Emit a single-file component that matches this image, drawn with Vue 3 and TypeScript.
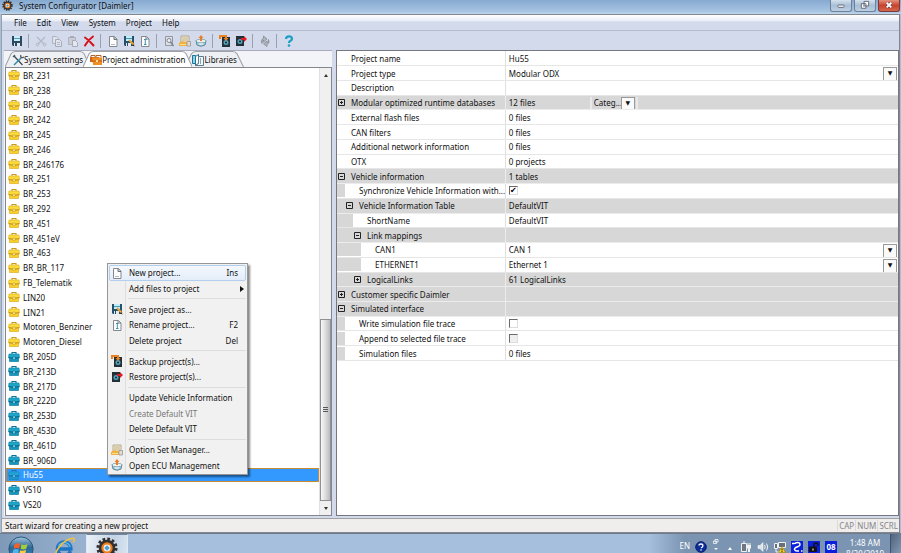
<script setup lang="ts">
import { computed, ref } from 'vue'

interface ToolItem { icon: string; label: string; disabled?: boolean }
interface PropRow {
  label: string
  value?: string
  level: number
  group?: boolean
  open?: boolean
  kind?: 'select' | 'check' | 'category'
  checked?: boolean
  disabled?: boolean
}
interface MenuEntry { label: string; icon?: string; key?: string; sub?: boolean; disabled?: boolean; hot?: boolean }

const menus = ['File', 'Edit', 'View', 'System', 'Project', 'Help']

const toolGroups: ToolItem[][] = [
  [{ icon: 'save', label: 'Save' }],
  [
    { icon: 'cut', label: 'Cut', disabled: true },
    { icon: 'copy', label: 'Copy', disabled: true },
    { icon: 'paste', label: 'Paste', disabled: true },
    { icon: 'delete', label: 'Delete' },
  ],
  [
    { icon: 'new', label: 'New project' },
    { icon: 'saveas', label: 'Save project as' },
    { icon: 'rename', label: 'Rename project' },
  ],
  [
    { icon: 'view', label: 'Preview', disabled: true },
    { icon: 'options', label: 'Option Set Manager' },
    { icon: 'ecu', label: 'Open ECU Management' },
  ],
  [
    { icon: 'backup', label: 'Backup projects' },
    { icon: 'restore', label: 'Restore projects' },
  ],
  [{ icon: 'sync', label: 'Synchronize', disabled: true }],
  [{ icon: 'help', label: 'Help' }],
]

const tabs = [
  { label: 'System settings', icon: 'tools', w: 84 },
  { label: 'Project administration', icon: 'case-orange', w: 107 },
  { label: 'Libraries', icon: 'books', w: 54 },
]
const activeTab = ref(1)
const tabPath = (w: number) => `M0 17 L6 3 Q7.5 .5 10 .5 H${w - 10} Q${w - 7.5} .5 ${w - 6} 3 L${w} 17`

const yellow = ['BR_231', 'BR_238', 'BR_240', 'BR_242', 'BR_245', 'BR_246', 'BR_246176', 'BR_251', 'BR_253', 'BR_292', 'BR_451', 'BR_451eV', 'BR_463', 'BR_BR_117', 'FB_Telematik', 'LIN20', 'LIN21', 'Motoren_Benziner', 'Motoren_Diesel']
const blue = ['BR_205D', 'BR_213D', 'BR_217D', 'BR_222D', 'BR_253D', 'BR_453D', 'BR_461D', 'BR_906D', 'Hu55', 'VS10', 'VS20']
const projects = computed(() => [
  ...yellow.map((name) => ({ name, icon: 'case-yellow' })),
  ...blue.map((name) => ({ name, icon: 'case-blue' })),
])
const selected = ref('Hu55')

const rows: PropRow[] = [
  { label: 'Project name', value: 'Hu55', level: 0 },
  { label: 'Project type', value: 'Modular ODX', level: 0, kind: 'select' },
  { label: 'Description', level: 0 },
  { label: 'Modular optimized runtime databases', value: '12 files', level: 0, group: true, open: false, kind: 'category' },
  { label: 'External flash files', value: '0 files', level: 0 },
  { label: 'CAN filters', value: '0 files', level: 0 },
  { label: 'Additional network information', value: '0 files', level: 0 },
  { label: 'OTX', value: '0 projects', level: 0 },
  { label: 'Vehicle information', value: '1 tables', level: 0, group: true, open: true },
  { label: 'Synchronize Vehicle Information with...', level: 1, kind: 'check', checked: true },
  { label: 'Vehicle Information Table', value: 'DefaultVIT', level: 1, group: true, open: true },
  { label: 'ShortName', value: 'DefaultVIT', level: 2 },
  { label: 'Link mappings', level: 2, group: true, open: true },
  { label: 'CAN1', value: 'CAN 1', level: 3, kind: 'select' },
  { label: 'ETHERNET1', value: 'Ethernet 1', level: 3, kind: 'select' },
  { label: 'LogicalLinks', value: '61 LogicalLinks', level: 2, group: true, open: false },
  { label: 'Customer specific Daimler', level: 0, group: true, open: false },
  { label: 'Simulated interface', level: 0, group: true, open: true },
  { label: 'Write simulation file trace', level: 1, kind: 'check' },
  { label: 'Append to selected file trace', level: 1, kind: 'check', disabled: true },
  { label: 'Simulation files', value: '0 files', level: 1 },
]

const contextGroups: MenuEntry[][] = [
  [
    { label: 'New project...', icon: 'new', key: 'Ins', hot: true },
    { label: 'Add files to project', sub: true },
  ],
  [
    { label: 'Save project as...', icon: 'saveas' },
    { label: 'Rename project...', icon: 'rename', key: 'F2' },
    { label: 'Delete project', key: 'Del' },
  ],
  [
    { label: 'Backup project(s)...', icon: 'backup' },
    { label: 'Restore project(s)...', icon: 'restore' },
  ],
  [
    { label: 'Update Vehicle Information' },
    { label: 'Create Default VIT', disabled: true },
    { label: 'Delete Default VIT' },
  ],
  [
    { label: 'Option Set Manager...', icon: 'options' },
    { label: 'Open ECU Management', icon: 'ecu' },
  ],
]
</script>

<template>
  <svg class="sprite" aria-hidden="true">
    <linearGradient id="orb" x1="0" y1="0" x2="0" y2="1">
      <stop offset="0" stop-color="#9fc3dc" /><stop offset=".45" stop-color="#2d6594" /><stop offset="1" stop-color="#2f9fd0" />
    </linearGradient>
    <symbol id="i-save" viewBox="0 0 12 12">
      <path d="M1 1h10v10H2L1 10z" fill="#2b4a60" />
      <path d="M3 1h6v5H3z" fill="#cfeaf4" /><path d="M3 3h6v1H3z" fill="#4aa3c0" />
      <path d="M3 8h6v3H3z" fill="#e4e8ec" /><path d="M4 8h2v3H4z" fill="#2b4a60" />
    </symbol>
    <symbol id="i-saveas" viewBox="0 0 12 12">
      <path d="M1 1h10v10H2L1 10z" fill="#24516b" />
      <path d="M3 1h6v5H3z" fill="#c4ebf7" /><path d="M3 3h6v1H3z" fill="#3d9fc0" />
      <path d="M3 8h5v3H3z" fill="#e4e8ec" /><path d="M4 8h1v3H4z" fill="#24516b" />
      <path d="M6 5l5 5" stroke="#e8a33a" stroke-width="2" /><path d="M10 9l1.800 2.500-2.500-1z" fill="#222" />
    </symbol>
    <symbol id="i-cut" viewBox="0 0 12 12">
      <path d="M2 2l7 7M10 2L3 9" stroke="#b3b8c4" stroke-width="1.300" />
      <circle cx="2.500" cy="9.500" r="1.300" fill="none" stroke="#b3b8c4" /><circle cx="9.500" cy="9.500" r="1.300" fill="none" stroke="#b3b8c4" />
    </symbol>
    <symbol id="i-copy" viewBox="0 0 12 12">
      <path d="M1.500 1.500h4l2 2v5h-6z" fill="#dfe3ec" stroke="#aeb3be" /><path d="M4.500 4.500h4l2 2v5h-6z" fill="#dfe3ec" stroke="#a6abb6" />
      <path d="M6 7.500h3M6 9.500h3" stroke="#b3b8c4" />
    </symbol>
    <symbol id="i-paste" viewBox="0 0 12 12">
      <path d="M1.500 2.500h7v7h-7z" fill="#c9cdd7" stroke="#b0b4bf" /><path d="M3 1h4v2H3z" fill="#a6abb6" />
      <path d="M5.500 5.500h3l2 2v4h-5z" fill="#e4e7ee" stroke="#a6abb6" />
    </symbol>
    <symbol id="i-delete" viewBox="0 0 12 12">
      <path d="M2 2.500Q6 5 10.500 10.500M10 1.500Q5 5 2 10.500" stroke="#d6141c" stroke-width="2" fill="none" stroke-linecap="round" />
    </symbol>
    <symbol id="i-new" viewBox="0 0 12 12">
      <path d="M2.500 1.500h5l2.500 2.500v7.500H2.500z" fill="#fdfdfd" stroke="#85888e" /><path d="M7 1.500V4.500h3" fill="#c9ccd2" stroke="#6f7278" />
      <path d="M4 9.500h4" stroke="#b8bcc4" />
    </symbol>
    <symbol id="i-rename" viewBox="0 0 12 12">
      <path d="M2.500 1.500h5l2.500 2.500v7.500H2.500z" fill="#fdfdfd" stroke="#85898f" /><path d="M5 4.500h2.500M6.300 4.500v5M5 9.500h2.500" stroke="#3f93ae" fill="none" />
      <path d="M7 1.500V4h3" fill="none" stroke="#7b7f86" />
    </symbol>
    <symbol id="i-view" viewBox="0 0 12 12">
      <path d="M2.500 1.500h7v9h-7z" fill="#dcdfe6" stroke="#9297a1" /><circle cx="6" cy="5.500" r="2" fill="#eef0f4" stroke="#80858f" />
      <path d="M7.500 7l3 4" stroke="#80858f" stroke-width="1.500" />
    </symbol>
    <symbol id="i-options" viewBox="0 0 12 12">
      <path d="M2 1h8v7H2z" fill="#f9efcf" stroke="#a5977a" stroke-width=".8" /><path d="M4 2v5M6 2v4M8 2v4" stroke="#b7ab90" />
      <path d="M0 8l2-1.500h7l3 1V11H0z" fill="#efb140" /><path d="M8 6.500h3.500V11H8z" fill="#dcdcdc" stroke="#9a9a9a" stroke-width=".8" /><path d="M1 9.500h6" stroke="#fbe08a" />
    </symbol>
    <symbol id="i-ecu" viewBox="0 0 12 12">
      <path d="M1 5.500h10L10 10q-4 2.500-8 0z" fill="#a9cfdd" stroke="#5b8796" />
      <ellipse cx="6" cy="6" rx="5" ry="1.800" fill="#e6f2f6" stroke="#6f97a5" stroke-width=".7" />
      <path d="M6 0l2.500 3H7v3H5V3H3.500z" fill="#ee7d22" /><path d="M4 9h4" stroke="#fff" />
    </symbol>
    <symbol id="i-backup" viewBox="0 0 12 12">
      <path d="M3 2h8v10H3z" fill="#243038" /><circle cx="7" cy="7.500" r="2.500" fill="#54a4bd" /><circle cx="7" cy="7.500" r="1" fill="#1b2328" />
      <path d="M1 4V1h6v3" fill="none" stroke="#e9821f" stroke-width="2" /><path d="M4.500 3h5L7 6z" fill="#e9821f" />
    </symbol>
    <symbol id="i-restore" viewBox="0 0 12 12">
      <path d="M1 1h8v10H1z" fill="#243038" /><circle cx="5" cy="6.500" r="2.500" fill="#54a4bd" /><circle cx="5" cy="6.500" r="1" fill="#1b2328" />
      <path d="M6 3h3V1l3 3-3 3V5H6z" fill="#df1f24" />
    </symbol>
    <symbol id="i-sync" viewBox="0 0 12 12">
      <path d="M3 8.500Q1 5 4.500 3V1L8 4 4.500 7V5Q3 6 3 8.500z" fill="#b0b4bc" stroke="#868b94" stroke-width=".8" />
      <path d="M9.500 4.500q2 3.500-1.500 5v2L4.500 8.800 8 6v1.800Q9.500 7 9.500 4.500z" fill="#b0b4bc" stroke="#868b94" stroke-width=".8" />
    </symbol>
    <symbol id="i-help" viewBox="0 0 12 12">
      <path d="M3 4q0-2.700 3-2.700T9 3.800Q9 5 7.500 5.800 6 6.500 6 8" fill="none" stroke="#1f9fc6" stroke-width="2.200" /><circle cx="6" cy="10.500" r="1.300" fill="#1f9fc6" />
    </symbol>
    <symbol id="i-tools" viewBox="0 0 12 12">
      <path d="M2 2l8.500 9" stroke="#3d4b55" stroke-width="1.300" /><path d="M10 3L2 11" stroke="#2f88a8" stroke-width="1.500" />
      <path d="M9 1q-1 2 .5 2.500T12 3" fill="none" stroke="#4d565d" stroke-width="1.200" /><path d="M1 3l2-2" stroke="#4d565d" stroke-width="1.300" />
    </symbol>
    <symbol id="i-case-orange" viewBox="0 0 12 12">
      <path d="M1 3V1.500h4v2M6 3V1.500h5v2" fill="none" stroke="#b2622a" /><path d="M0 3h9v5H0z" fill="#c9651f" />
      <path d="M2 3.500h10V11H3z" fill="#ee8e27" /><path d="M2 7h10" stroke="#bf5c15" /><path d="M6 6h2v2H6z" fill="#ffe08a" />
    </symbol>
    <symbol id="i-case-yellow" viewBox="0 0 12 12">
      <path d="M4 3V1.500h4V3" fill="none" stroke="#c79a1c" stroke-width="1.100" /><path d="M1 3h10l.5 4H.5z" fill="#fcdc3a" stroke="#e0b528" stroke-width=".7" />
      <path d="M1.500 7h9v3.500h-9z" fill="#fbd02a" stroke="#dcae22" stroke-width=".7" /><path d="M1 6.500q5 2 10 0" fill="none" stroke="#c99a18" /><path d="M5 6h2v2.500H5z" fill="#fff3ae" stroke="#c2941a" stroke-width=".5" />
    </symbol>
    <symbol id="i-case-blue" viewBox="0 0 12 12">
      <path d="M4 3V1.500h4V3" fill="none" stroke="#0f7094" stroke-width="1.100" /><path d="M1 3h10l.5 4H.5z" fill="#1da6ca" stroke="#1389ae" stroke-width=".7" />
      <path d="M1.500 7h9v3.500h-9z" fill="#1497be" stroke="#0f7fa4" stroke-width=".7" /><path d="M1 6.500q5 2 10 0" fill="none" stroke="#0c6c8e" /><path d="M5 6h2v2.500H5z" fill="#a4e4f3" stroke="#0b6587" stroke-width=".5" />
    </symbol>
    <symbol id="i-books" viewBox="0 0 12 12">
      <path d="M.5 1.500h3v8h-3z" fill="#8fd0e6" stroke="#1a7596" /><path d="M3.500 2.500l3-2v9l-3 2z" fill="#fff" stroke="#1a7596" />
      <path d="M6.500 2.500h5v9h-8l3-2z" fill="#eef7fa" stroke="#5b7c8a" /><path d="M8.500 4v6" stroke="#8aa4ae" />
    </symbol>
    <symbol id="i-gear" viewBox="0 0 24 24">
      <circle cx="12" cy="12" r="9.500" fill="none" stroke="#33302f" stroke-width="4" stroke-dasharray="2.800 2.174" />
      <circle cx="12" cy="12" r="7" fill="#fff" stroke="#33302f" stroke-width="4" /><circle cx="12" cy="12" r="5" fill="#e8f1f6" stroke="#ee7d1c" stroke-width="2.400" />
      <path d="M12 9l3 3-3 3-3-3z" fill="#4f9fc9" />
    </symbol>
    <symbol id="i-start" viewBox="0 0 28 28">
      <circle cx="14" cy="14" r="13" fill="url(#orb)" stroke="#254f74" />
      <path d="M7 9q3-2 6-.5l-1 5q-3-1.500-6 .3z" fill="#f0622a" /><path d="M14.500 9q3 1.500 6.500-.5l-1.200 5q-3 1.800-6.200.3z" fill="#a3ce3b" />
      <path d="M5.700 15q3-1.800 6-.3l-1 5q-3-1.300-6 .5z" fill="#4fb4ec" /><path d="M13.200 15.300q3.300 1.400 6.300-.4l-1.200 5q-3 1.800-6.200.3z" fill="#fccd3a" />
    </symbol>
    <symbol id="i-ie" viewBox="0 0 24 24">
      <path d="M19 15.500A7.300 7.300 0 1 1 19.500 13H6" fill="none" stroke="#1d74c4" stroke-width="3.800" />
      <path d="M19 11A7 7 0 0 0 6 10" fill="none" stroke="#63c0ee" stroke-width="1.300" />
      <path d="M4 21q-3-2 2-9Q12 4 19 2t3 4" fill="none" stroke="#f3c13c" stroke-width="1.700" />
    </symbol>
    <symbol id="t-help" viewBox="0 0 12 12">
      <circle cx="6" cy="6" r="5.300" fill="#0b2e9c" stroke="#0a1f66" /><path d="M4 4.500Q4 3 6 3t2 1.500T6 7" fill="none" stroke="#fff" stroke-width="1.300" /><circle cx="6" cy="9" r=".8" fill="#fff" />
    </symbol>
    <symbol id="t-windows" viewBox="0 0 8 12">
      <path d="M3 .5h3v2.500H3zM1.500 2h3v2.500h-3z" fill="#7e93ad" stroke="#f2f6fa" stroke-width=".8" /><path d="M2 9h4L4 11z" fill="#f2f6fa" />
    </symbol>
    <symbol id="t-plug" viewBox="0 0 12 12">
      <path d="M1.500 2.500h5v8h-5z" fill="#6d7681" stroke="#f1f1f1" /><path d="M3 1h2M8 2v2M10 2v2" stroke="#f1f1f1" /><path d="M7 4h4v3l-1 1v3H8V8L7 7z" fill="#f1f1f1" />
    </symbol>
    <symbol id="t-sound" viewBox="0 0 12 12">
      <path d="M1 4.500h2l3-3v9l-3-3H1z" fill="#dfe5ec" stroke="#f5f7f9" stroke-width=".6" /><path d="M7.500 4q1.500 2 0 4M9.500 2.500q2.500 3.500 0 7" fill="none" stroke="#f2f5f8" />
    </symbol>
    <symbol id="t-net" viewBox="0 0 12 12">
      <path d="M.5 2.500h3v5h-3zM4.500 1.500h7v5h-7z" fill="#65717f" stroke="#f2f2f2" /><path d="M2 8v3h4" stroke="#f2f2f2" fill="none" />
      <path d="M8 5.500l3.500 6h-7z" fill="#ffd51e" stroke="#a07a00" stroke-width=".5" /><path d="M8 7.500v2M8 10v1" stroke="#222" />
    </symbol>
    <symbol id="t-two" viewBox="0 0 12 12">
      <path d="M0 0h12v12H0z" fill="#0a1fdc" /><path d="M1 2.500h2.500M4 3q0-1.500 2.500-1.500t2.500 2Q9 5 6 6T3.500 8.500 6 10h2M10 10h1.500" fill="none" stroke="#fff" stroke-width="1.400" />
    </symbol>
    <symbol id="t-lock" viewBox="0 0 12 12">
      <path d="M0 0h12v12H0z" fill="#0a1fdc" /><path d="M1 5.500h8V11H1z" fill="#111" /><path d="M6 6V3.500Q6 2 8 2t2 1.500V5" fill="none" stroke="#111" stroke-width="1.500" /><path d="M4.500 7.500h1v2h-1z" fill="#fff" />
    </symbol>
  </svg>

  <main class="screen">
    <header class="titlebar">
      <svg class="app-icon"><use href="#i-gear" /></svg>
      <h1>System Configurator [Daimler]</h1>
      <div class="win-buttons">
        <button type="button" aria-label="Minimize"><svg viewBox="0 0 20 12"><rect x="6.500" y="5.500" width="7" height="2.500" rx="1" fill="#fff" stroke="#5d6470" /></svg></button>
        <button type="button" aria-label="Restore"><svg viewBox="0 0 20 12"><path d="M9 1.500h5v5H9zM6 4h5v5H6z" fill="#fff" stroke="#5d6470" /><path d="M8 6h1v1H8z" fill="#5d6470" /></svg></button>
        <button type="button" class="close" aria-label="Close"><svg viewBox="0 0 20 12"><path d="M7.500 3l5 5M12.500 3l-5 5" stroke="#6a4040" stroke-width="3.400" /><path d="M7.500 3l5 5M12.500 3l-5 5" stroke="#fff" stroke-width="2" /></svg></button>
      </div>
    </header>

    <div class="window">
      <nav class="menubar">
        <button v-for="m in menus" :key="m" type="button">{{ m }}</button>
      </nav>

      <div class="toolbar" role="toolbar">
        <div v-for="(g, i) in toolGroups" :key="i" class="tool-group">
          <button v-for="t in g" :key="t.icon" type="button" :aria-label="t.label" :disabled="t.disabled">
            <svg class="icon"><use :href="'#i-' + t.icon" /></svg>
          </button>
        </div>
      </div>

      <div class="panes">
        <section class="left">
          <div class="tabs" role="tablist">
            <button
              v-for="(t, i) in tabs" :key="t.label" type="button" role="tab"
              :aria-selected="i === activeTab" :class="{ active: i === activeTab }" @click="activeTab = i"
            >
              <svg class="tab-shape" :viewBox="`0 0 ${t.w} 17`" preserveAspectRatio="none"><path :d="tabPath(t.w)" /></svg>
              <svg class="icon"><use :href="'#i-' + t.icon" /></svg>
              <span>{{ t.label }}</span>
            </button>
          </div>

          <div class="tree-box">
            <ul class="tree">
              <li v-for="p in projects" :key="p.name" :class="{ selected: p.name === selected }" @click="selected = p.name">
                <svg class="icon"><use :href="'#i-' + p.icon" /></svg>
                <span>{{ p.name }}</span>
              </li>
            </ul>
            <div class="scrollbar">
              <button type="button" aria-label="Scroll up"><i class="arrow up"></i></button>
              <div class="track"></div>
              <div class="thumb"><i></i><i></i><i></i></div>
              <button type="button" aria-label="Scroll down"><i class="arrow"></i></button>
            </div>

            <ul class="context" role="menu">
              <template v-for="(g, gi) in contextGroups" :key="gi">
                <li v-if="gi" class="rule" role="separator"></li>
                <li v-for="e in g" :key="e.label" class="entry" role="none">
                  <button type="button" role="menuitem" :disabled="e.disabled" :class="{ hot: e.hot }">
                    <span class="slot"><svg v-if="e.icon" class="icon"><use :href="'#i-' + e.icon" /></svg></span>
                    <span class="text">{{ e.label }}</span>
                    <kbd v-if="e.key">{{ e.key }}</kbd>
                    <i v-if="e.sub" class="submark"></i>
                  </button>
                </li>
              </template>
            </ul>
          </div>
        </section>

        <section class="right">
          <table class="props">
            <colgroup><col class="c-name"><col></colgroup>
            <tbody>
              <tr v-for="(r, i) in rows" :key="i" :class="[{ group: r.group }, 'l' + r.level]">
                <th scope="row">
                  <div class="name">
                    <span class="gutter">
                      <svg v-if="r.group" class="box" viewBox="0 0 7 7"><path d="M.5 .5h6v6h-6zM2 3.500h3" /><path v-if="!r.open" d="M3.500 2v3" /></svg>
                    </span>
                    <label v-if="r.kind" :for="'p' + i">{{ r.label }}</label>
                    <span v-else class="caption">{{ r.label }}</span>
                  </div>
                </th>
                <td>
                  <div v-if="r.kind === 'category'" class="category">
                    <span>{{ r.value }}</span>
                    <select :id="'p' + i"><option>Categ...</option></select>
                  </div>
                  <select v-else-if="r.kind === 'select'" :id="'p' + i"><option>{{ r.value }}</option></select>
                  <input v-else-if="r.kind === 'check'" :id="'p' + i" type="checkbox" :checked="r.checked" :disabled="r.disabled">
                  <span v-else>{{ r.value }}</span>
                </td>
              </tr>
            </tbody>
          </table>
        </section>
      </div>

      <footer class="status">
        <span class="message">Start wizard for creating a new project</span>
        <span>CAP</span><span>NUM</span><span>SCRL</span>
      </footer>
    </div>

    <div class="taskbar">
      <button type="button" class="start" aria-label="Start"><svg><use href="#i-start" /></svg></button>
      <button type="button" class="task" aria-label="Internet Explorer"><svg><use href="#i-ie" /></svg></button>
      <button type="button" class="task running" aria-label="System Configurator"><svg><use href="#i-gear" /></svg></button>
      <div class="tray">
        <span class="lang">EN</span>
        <svg class="icon"><use href="#t-help" /></svg>
        <svg class="thin"><use href="#t-windows" /></svg>
        <i class="arrow up light"></i>
        <svg class="icon"><use href="#t-plug" /></svg>
        <svg class="icon"><use href="#t-sound" /></svg>
        <svg class="icon"><use href="#t-net" /></svg>
        <svg class="icon"><use href="#t-two" /></svg>
        <svg class="icon"><use href="#t-lock" /></svg>
        <span class="day">08</span>
        <time class="clock"><span>1:48 AM</span><span>8/20/2019</span></time>
        <button type="button" class="peek" aria-label="Show desktop"></button>
      </div>
    </div>
  </main>
</template>

<style>
body { overflow: hidden; }
</style>

<style scoped>
.screen, .screen button, .screen select, .screen kbd {
  font: 8px/11px "Noto Sans", "Open Sans", sans-serif;
  color: #111;
}
.screen * { box-sizing: border-box; }
.screen { display: flex; flex-direction: column; height: 100vh; background: #a5bfdd; overflow: hidden; }
button { border: 0; padding: 0; background: none; }
ul { list-style: none; margin: 0; padding: 0; }
svg { display: block; flex: none; }
.sprite { position: absolute; width: 0; height: 0; }
.icon { width: 12px; height: 12px; }

.titlebar { display: flex; align-items: center; height: 14px; padding: 0 1px 3px 2px; background: linear-gradient(#86a9d0, #a9c6e3 85%, #c2d8ec); flex: none; }
.app-icon { width: 11px; height: 11px; }
.titlebar h1 { margin: 0 0 0 6px; font-size: 8px; font-weight: 400; flex: 1; }
.win-buttons { display: flex; gap: 2px; align-self: flex-start; }
.win-buttons button { width: 22px; height: 12px; border: 1px solid #6f8198; border-top: 0; border-radius: 0 0 3px 3px; background: linear-gradient(#d5e1ee, #a9bfd6 50%, #bdd0e3); }
.win-buttons .close { background: linear-gradient(#e2917f, #c8432c 50%, #d3674e); border-color: #7b3a35; }
.win-buttons svg { width: 20px; height: 11px; }

.window { display: flex; flex-direction: column; flex: 1; min-height: 0; border: 1px solid #85858d; border-left-color: #9aa0aa; margin: 0 1px; background: #d2daec; }
.menubar { display: flex; gap: 10px; height: 16px; padding: 0 12px; align-items: center; background: linear-gradient(#fff, #e9edf7 40%, #d2daec 45%); border-bottom: 1px solid #b5bac8; flex: none; }
.toolbar { display: flex; height: 19px; padding-left: 7px; align-items: center; flex: none; }
.tool-group { display: flex; }
.tool-group button { width: 16px; height: 14px; display: grid; place-items: center; }
.tool-group + .tool-group { border-left: 1px solid #9a9fae; margin-left: 3px; padding-left: 4px; }

.panes { display: flex; flex: 1; min-height: 0; padding: 0 0 2px 2px; }
.left { display: flex; flex-direction: column; flex: none; width: 37%; max-width: 328px; background: #f3f4f7; border-top: 1px solid #aab; }
.tabs { display: flex; height: 16px; padding-left: 1px; flex: none; }
.tabs button { position: relative; display: flex; align-items: center; padding: 1px 7px 0; margin-right: -7px; white-space: nowrap; }
.tabs span, .tabs .icon { position: relative; }
.tab-shape { position: absolute; inset: 0; width: 100%; height: 100%; fill: #eff0f3; stroke: #9da1a8; }
.tabs .active { z-index: 1; }
.tabs .active .tab-shape { fill: #fff; }

.tree-box { position: relative; display: flex; flex: 1; min-height: 0; margin-left: 1px; border: 1px solid #85868c; background: #fff; }
.tree { display: flex; flex-direction: column; flex: 1; padding-bottom: 3px; }
.tree li { display: flex; flex: 1; align-items: center; gap: 3px; padding-left: 2px; min-height: 0; }
.tree .selected { background: #3399ff; color: #fff; outline: 1px solid #c98a35; outline-offset: -1px; }
.tree .selected .icon { opacity: .75; }
.scrollbar { display: flex; flex-direction: column; width: 12px; background: #f0f0f1; border-left: 1px solid #e0e0e2; }
.scrollbar button { height: 14px; display: grid; place-items: center; }
.arrow { border: 2px solid transparent; border-top: 3px solid #333; border-bottom: 0; }
.arrow.up { border-top: 0; border-bottom: 3px solid #333; }
.track { flex: 239; }
.thumb { flex: 182; display: flex; flex-direction: column; align-items: center; justify-content: center; gap: 1px; border: 1px solid #8f9094; background: linear-gradient(90deg, #f8f8f8, #dcdcde 50%, #b9babd); }
.thumb i { width: 5px; height: 1px; background: #55575c; }

.context { position: absolute; left: 101px; top: 195px; width: 141px; height: 212px; display: flex; flex-direction: column; padding: 1px; border: 1px solid #979797; background: linear-gradient(90deg, #f0f0f0 17px, #dedede 17px, #dedede 18px, #f1f1f1 18px); box-shadow: 2px 2px 2px #0007; }
.entry { flex: 1; display: flex; min-height: 0; }
.entry button { display: flex; align-items: center; flex: 1; border: 1px solid transparent; text-align: left; padding-right: 7px; }
.entry .hot { border-color: #b3cfee; border-radius: 2px; background: linear-gradient(#f4f8fd, #e3edf9); }
.entry button:disabled { color: #777; }
.slot { width: 19px; padding-left: 1px; }
.text { flex: 1; white-space: nowrap; }
.submark { border: 3px solid transparent; border-left: 4px solid #111; border-right: 0; margin-right: -6px; }
.rule { height: 5px; margin-left: 19px; background: linear-gradient(transparent 2px, #dcdcdc 2px, #dcdcdc 3px, transparent 3px); }

.right { flex: 1; min-width: 0; margin-left: 4px; border: 1px solid #77787f; background: #fff; }
.props { width: 100%; height: 310px; border-collapse: collapse; table-layout: fixed; }
.c-name { width: 30%; }
.props th, .props td { padding: 0; font-weight: 400; text-align: left; height: 14px; border-bottom: 1px solid #e6e6e6; vertical-align: middle; white-space: nowrap; overflow: hidden; }
.props th { border-right: 1px solid #e0e0e0; }
.props td { padding-left: 3px; }
.props .group th, .props .group td { background: #d7d7d7; border-color: #ececec; }
.name { display: flex; align-items: center; height: 13px; }
.gutter { display: flex; align-items: center; align-self: stretch; margin-right: 14px; justify-content: flex-end; flex: none; background: #d7d7d7; }
.l0 .gutter { width: 8px; margin-right: 6px; background: none; }
.l1 .gutter { width: 8px; }
.l2 .gutter { width: 16px; }
.l3 .gutter { width: 24px; }
.group.l1 .gutter { width: 16px; margin-right: 6px; }
.group.l2 .gutter { width: 24px; margin-right: 6px; }
.box { width: 7px; height: 7px; fill: none; stroke: #222; }
.props select { display: block; width: 100%; height: 12px; border: 0; padding: 0; appearance: none; background: none; }
.props td:has(> select), .category { position: relative; }
.props td:has(> select)::after, .category::after { content: "\25BC"; position: absolute; right: 1px; top: 1px; width: 12px; height: 12px; border: 1px solid #9a9a9a; background: #fafafa; text-align: center; font: 6px/9px "DejaVu Sans", sans-serif; pointer-events: none; }
.category { display: flex; align-items: center; width: 129px; border-right: 2px solid #e9e9e9; }
.category span { flex: 1; }
.props .category select { width: 46px; padding-left: 2px; border-left: 2px solid #e9e9e9; }
.category::after { top: 0; }
input[type="checkbox"] { display: grid; place-items: center; appearance: none; width: 9px; height: 9px; margin: 0; border: 1px solid; border-color: #6b6b6b #dcdcdc #dcdcdc #6b6b6b; background: #fff; }
input[type="checkbox"]:disabled { background: #efefef; }
input[type="checkbox"]:checked::before { content: "\2714"; font: 8px/8px "DejaVu Sans", sans-serif; color: #000; }

.status { display: flex; align-items: center; height: 14px; padding-left: 3px; background: #f0eeed; border-top: 1px solid #a2a2a4; flex: none; }
.status span { color: #85858a; padding: 0 1px; border-left: 1px solid #dcdada; }
.status .message { flex: 1; color: #111; padding: 0; border: 0; }

.taskbar { display: flex; align-items: flex-start; height: 20px; flex: none; overflow: hidden; background: linear-gradient(90deg, #7f99b8, #a5bfdd 130px, #a5bfdd 72%, #7b94b1 76%); border-top: 1px solid #6e7b8d; }
.taskbar > button { display: grid; justify-items: center; flex: none; }
.start { width: 42px; padding-top: 2px; }
.start svg { width: 26px; height: 26px; }
.task { width: 44px; height: 40px; padding-top: 3px; align-content: start; }
.task svg { width: 22px; height: 22px; }
.running { border: 1px solid #dfe9f4; border-top-color: #6f86a3; background: linear-gradient(100deg, #eaf1f8, #c3d3e5 60%, #dce7f2); width: 42px; padding-top: 2px; }
.tray { display: flex; margin-left: auto; align-items: flex-start; gap: 5px; padding-top: 7px; }
.tray span, .tray time { color: #fff; }
.tray .thin { width: 8px; height: 12px; margin-top: -2px; }
.arrow.light { border-bottom-color: #fff; margin: 6px 3px 0; }
.lang { margin-top: -1px; }
.tray .day { width: 12px; height: 12px; background: #0a1fdc; text-align: center; line-height: 12px; font-weight: 700; }
.clock { display: flex; flex-direction: column; align-items: center; width: 40px; margin: -4px 0 0 3px; }
.peek { width: 11px; height: 24px; margin-top: -7px; background: linear-gradient(120deg, #4f637d, #8aa0ba); border-left: 1px solid #41526a; }
</style>
